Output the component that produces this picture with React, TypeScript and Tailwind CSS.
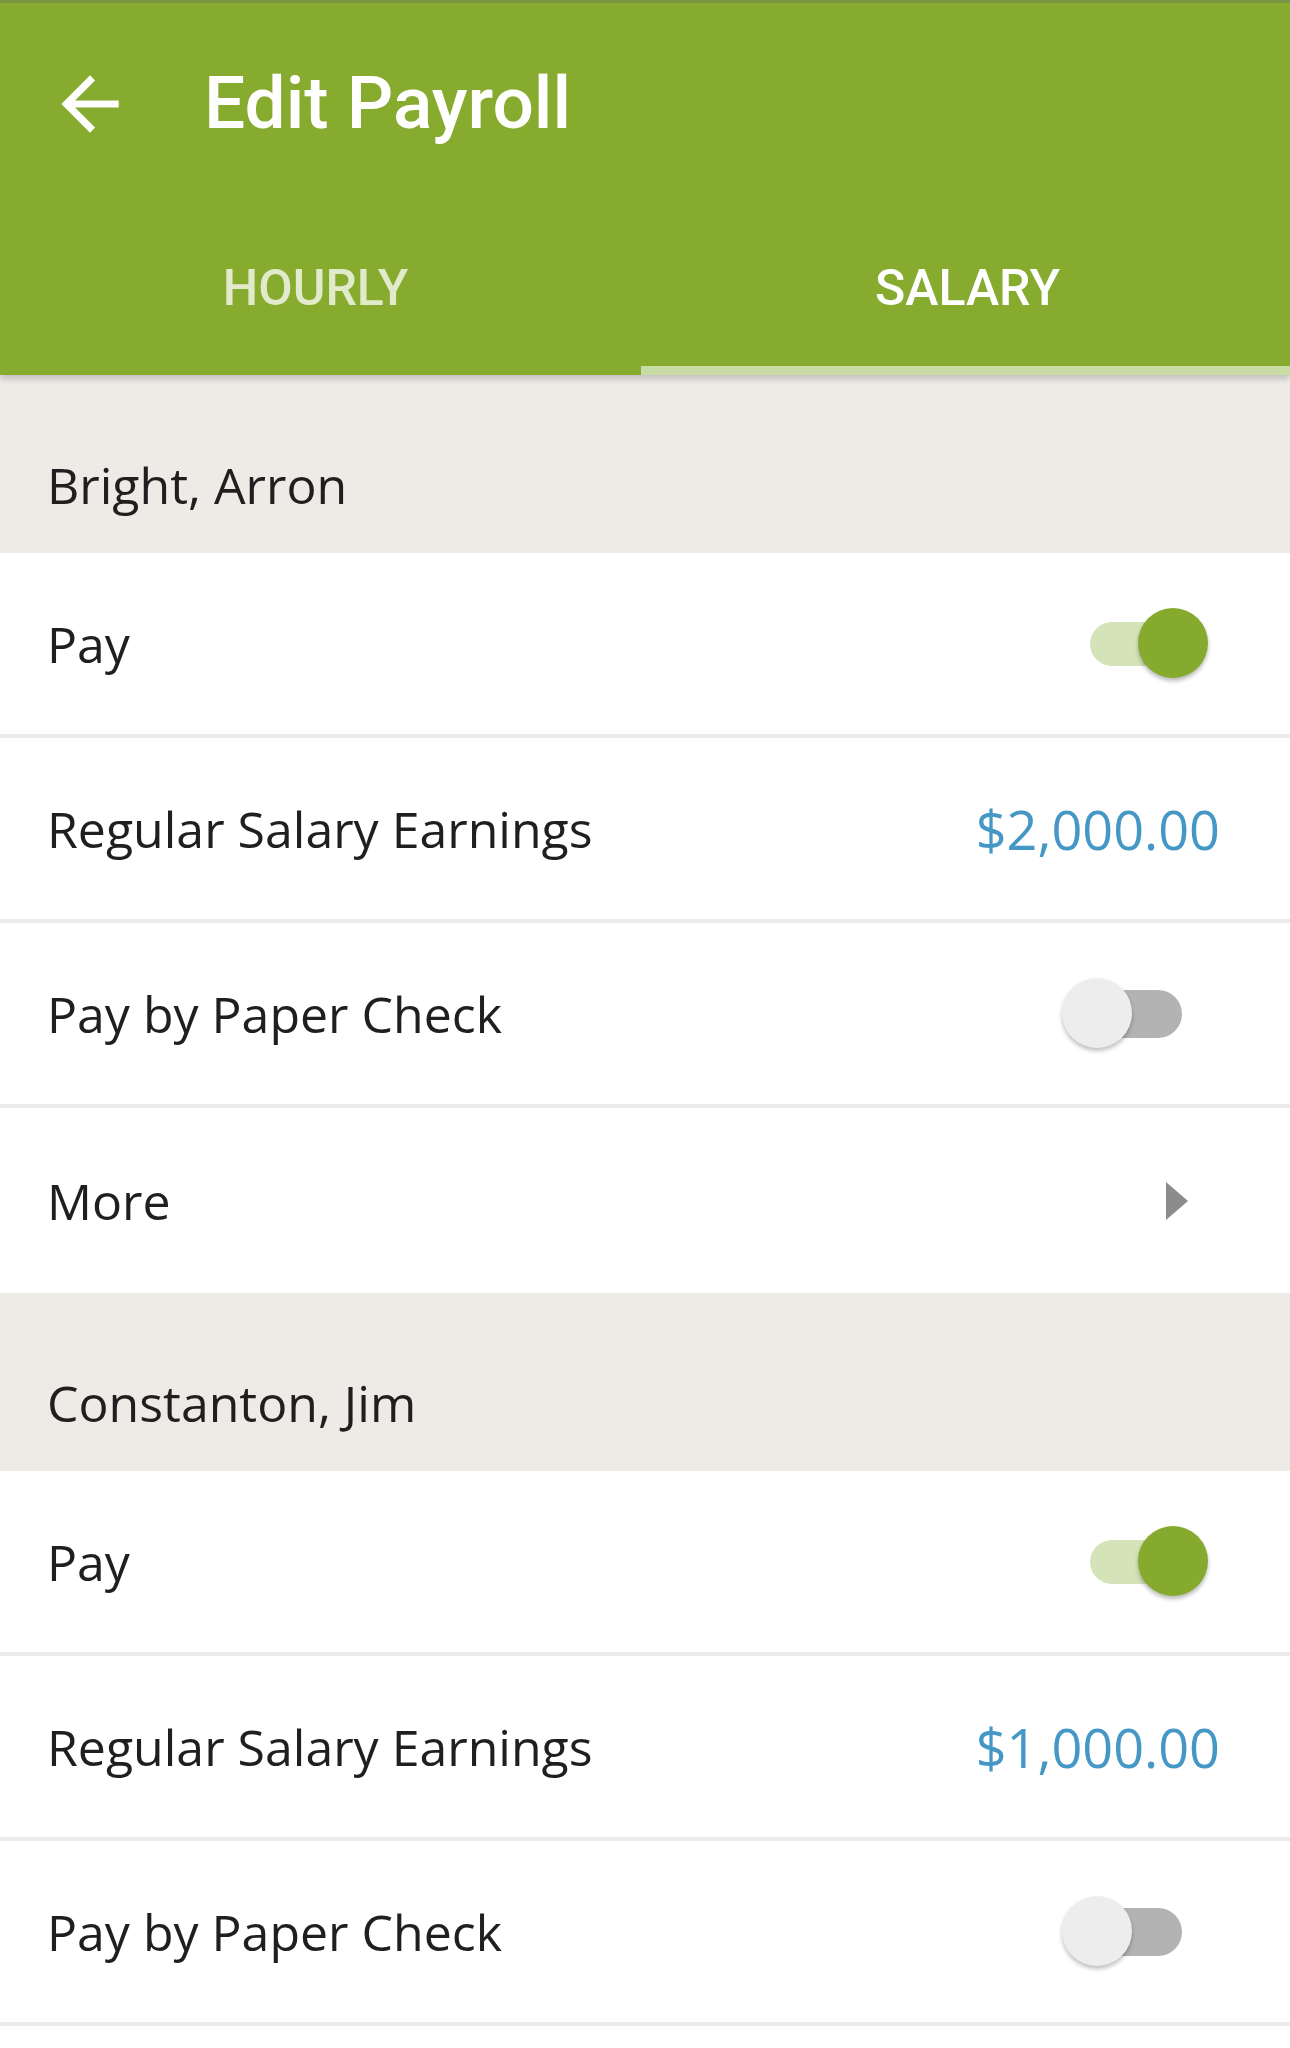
import type { ReactNode } from 'react';

const GREEN = 'bg-[#87ab2f]';

function BackArrow() {
  return (
    <svg viewBox="0 0 24 24" className="h-[86px] w-[86px] shrink-0" fill="#ffffff">
      <path d="M20 11H7.83l5.59-5.59L12 4l-8 8 8 8 1.41-1.41L7.83 13H20v-2z" />
    </svg>
  );
}

function Toggle({ on }: { on: boolean }) {
  if (on) {
    return (
      <div className="relative mr-[80px] h-[74px] w-[150px] shrink-0">
        <div className="absolute left-[30px] top-[15px] h-[44px] w-[100px] rounded-full bg-[#d5e4b8]" />
        <div className="absolute left-[78px] top-[1px] h-[70px] w-[70px] rounded-full bg-[#86aa2e] shadow-[0_3px_4px_rgba(0,0,0,0.28)]" />
      </div>
    );
  }
  return (
    <div className="relative mr-[80px] h-[74px] w-[150px] shrink-0">
      <div className="absolute left-[22px] top-[13px] h-[48px] w-[100px] rounded-full bg-[#b3b3b3]" />
      <div className="absolute left-[2px] top-[1px] h-[70px] w-[70px] rounded-full bg-[#ededed] shadow-[0_3px_4px_rgba(0,0,0,0.25)]" />
    </div>
  );
}

function Amount({ value }: { value: string }) {
  return <span className="mr-[70px] text-[54px] leading-[68px] text-[#4597c6]">{value}</span>;
}

function Chevron() {
  return (
    <svg viewBox="0 0 22 38" className="mr-[102px] h-[38px] w-[22px] shrink-0" fill="#8c8c8c">
      <path d="M0 0L22 19L0 38z" />
    </svg>
  );
}

function Row({ label, right, border = true }: { label: string; right: ReactNode; border?: boolean }) {
  return (
    <div
      className={
        'flex h-[185px] items-center justify-between bg-white pl-[47px] ' +
        (border ? 'border-b-[4px] border-[#ebebeb]' : '')
      }
    >
      <span className="text-[50px] leading-[68px] text-[#1f1f1f]">{label}</span>
      {right}
    </div>
  );
}

function SectionHeader({ name }: { name: string }) {
  return (
    <div className="h-[178px] bg-[#eeebe7] pl-[47px] pt-[76px]">
      <span className="text-[50px] leading-[68px] text-[#1f1f1f]">{name}</span>
    </div>
  );
}

type Employee = { name: string; pay: boolean; salary: string; paperCheck: boolean; more: boolean };

const employees: Employee[] = [
  { name: 'Bright, Arron', pay: true, salary: '$2,000.00', paperCheck: false, more: true },
  { name: 'Constanton, Jim', pay: true, salary: '$1,000.00', paperCheck: false, more: false },
];

export default function App() {
  return (
    <div className="min-h-screen w-full bg-white font-['Open_Sans',sans-serif]">
      <header className={'relative z-10 shadow-[0_4px_6px_rgba(0,0,0,0.18)] ' + GREEN}>
        <div className="h-[3px] bg-[#7b9545]" />
        <div className="flex h-[197px] items-center pl-[47px] pt-[4px]">
          <BackArrow />
          <h1 className="ml-[71px] font-['Roboto',sans-serif] text-[73px] font-medium leading-none text-white">
            Edit Payroll
          </h1>
        </div>
        <div className="grid h-[175px] grid-cols-2 font-['Roboto',sans-serif] text-[50px] font-medium leading-none">
          <div className="flex items-center justify-center pr-[14px] text-white/75">HOURLY</div>
          <div className="relative flex items-center justify-center text-white">
            SALARY
            <div className="absolute bottom-0 left-[-4px] right-0 h-[9px] bg-[#c9dca6]" />
          </div>
        </div>
      </header>

      <main>
        {employees.map(e => (
          <section key={e.name}>
            <SectionHeader name={e.name} />
            <Row label="Pay" right={<Toggle on={e.pay} />} />
            <Row label="Regular Salary Earnings" right={<Amount value={e.salary} />} />
            <Row label="Pay by Paper Check" right={<Toggle on={e.paperCheck} />} />
            {e.more && <Row label="More" right={<Chevron />} border={false} />}
          </section>
        ))}
      </main>
    </div>
  );
}
